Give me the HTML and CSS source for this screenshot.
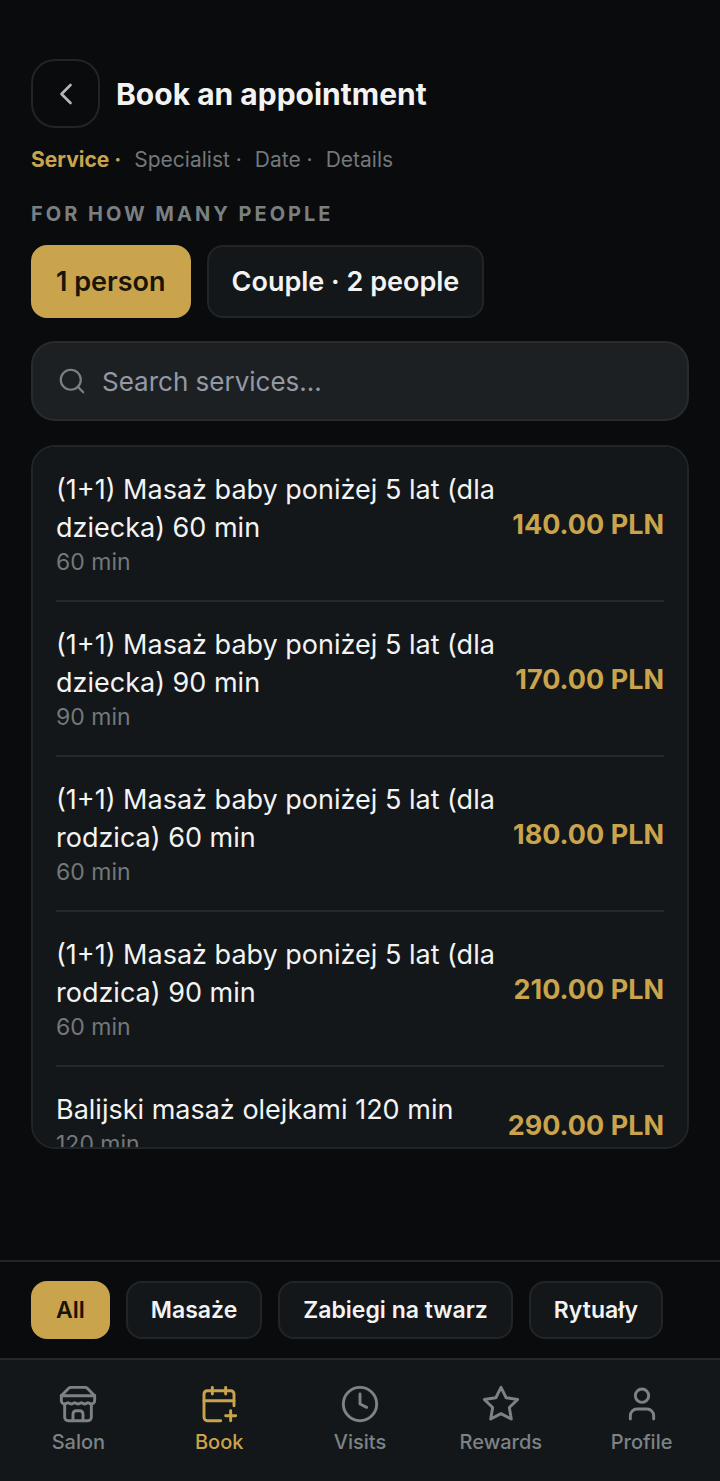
FILE: index.html
```html
<!DOCTYPE html>
<html lang="en">

<head>
    <meta charset="UTF-8" />
    <meta name="viewport" content="width=device-width, initial-scale=1.0" />
    <title>Book an appointment</title>
    <link rel="stylesheet" href="styles.css">
</head>

<body>
    <main class="booking">
        <header class="header">
            <button class="back" type="button" aria-label="Back">
                <svg class="icon" width="36" height="36" viewBox="0 0 24 24">
                    <path d="m15 18-6-6 6-6" />
                </svg>
            </button>
            <h1>Book an appointment</h1>
        </header>

        <ol class="steps">
            <li class="current">Service ·</li>
            <li>Specialist ·</li>
            <li>Date ·</li>
            <li>Details</li>
        </ol>

        <h2>For how many people</h2>
        <div class="people">
            <button class="choice active" type="button">1 person</button>
            <button class="choice" type="button">Couple · 2 people</button>
        </div>

        <label class="search">
            <svg class="icon" width="30" height="30" viewBox="0 0 24 24">
                <circle cx="11" cy="11" r="8" />
                <path d="m21 21-4.3-4.3" />
            </svg>
            <input type="text" placeholder="Search services..." aria-label="Search services">
        </label>

        <ul class="services">
            <li class="service">
                <div>
                    <p class="name">(1+1) Masaż baby poniżej 5 lat (dla dziecka) 60 min</p>
                    <p class="duration">60 min</p>
                </div>
                <span class="price">140.00 PLN</span>
            </li>
            <li class="service">
                <div>
                    <p class="name">(1+1) Masaż baby poniżej 5 lat (dla dziecka) 90 min</p>
                    <p class="duration">90 min</p>
                </div>
                <span class="price">170.00 PLN</span>
            </li>
            <li class="service">
                <div>
                    <p class="name">(1+1) Masaż baby poniżej 5 lat (dla rodzica) 60 min</p>
                    <p class="duration">60 min</p>
                </div>
                <span class="price">180.00 PLN</span>
            </li>
            <li class="service">
                <div>
                    <p class="name">(1+1) Masaż baby poniżej 5 lat (dla rodzica) 90 min</p>
                    <p class="duration">60 min</p>
                </div>
                <span class="price">210.00 PLN</span>
            </li>
            <li class="service">
                <div>
                    <p class="name">Balijski masaż olejkami 120 min</p>
                    <p class="duration">120 min</p>
                </div>
                <span class="price">290.00 PLN</span>
            </li>
        </ul>
    </main>

    <div class="categories">
        <button class="chip active" type="button">All</button>
        <button class="chip" type="button">Masaże</button>
        <button class="chip" type="button">Zabiegi na twarz</button>
        <button class="chip" type="button">Rytuały</button>
    </div>

    <nav class="tabs">
        <a class="tab" href="#salon">
            <svg class="icon" width="40" height="40" viewBox="0 0 24 24">
                <path d="m2 7 4.41-4.41A2 2 0 0 1 7.83 2h8.34a2 2 0 0 1 1.42.59L22 7" />
                <path d="M4 12v8a2 2 0 0 0 2 2h12a2 2 0 0 0 2-2v-8" />
                <path d="M15 22v-4a2 2 0 0 0-2-2h-2a2 2 0 0 0-2 2v4" />
                <path d="M2 7h20" />
                <path d="M22 7v3a2 2 0 0 1-2 2a2.7 2.7 0 0 1-1.59-.63.7.7 0 0 0-.82 0A2.7 2.7 0 0 1 16 12a2.7 2.7 0 0 1-1.59-.63.7.7 0 0 0-.82 0A2.7 2.7 0 0 1 12 12a2.7 2.7 0 0 1-1.59-.63.7.7 0 0 0-.82 0A2.7 2.7 0 0 1 8 12a2.7 2.7 0 0 1-1.59-.63.7.7 0 0 0-.82 0A2.7 2.7 0 0 1 4 12a2 2 0 0 1-2-2V7" />
            </svg>
            Salon
        </a>
        <a class="tab current" href="#book">
            <svg class="icon" width="40" height="40" viewBox="0 0 24 24">
                <path d="M21 13V6a2 2 0 0 0-2-2H5a2 2 0 0 0-2 2v14a2 2 0 0 0 2 2h8" />
                <path d="M3 10h18M16 2v4M8 2v4M16 19h6M19 16v6" />
            </svg>
            Book
        </a>
        <a class="tab" href="#visits">
            <svg class="icon" width="40" height="40" viewBox="0 0 24 24">
                <circle cx="12" cy="12" r="10" />
                <path d="M12 6v6l4 2" />
            </svg>
            Visits
        </a>
        <a class="tab" href="#rewards">
            <svg class="icon" width="40" height="40" viewBox="0 0 24 24">
                <path d="m12 2 3.09 6.26L22 9.27l-5 4.87 1.18 6.88L12 17.77l-6.18 3.25L7 14.14 2 9.27l6.91-1.01z" />
            </svg>
            Rewards
        </a>
        <a class="tab" href="#profile">
            <svg class="icon" width="40" height="40" viewBox="0 0 24 24">
                <path d="M19 21v-2a4 4 0 0 0-4-4H9a4 4 0 0 0-4 4v2" />
                <circle cx="12" cy="7" r="4" />
            </svg>
            Profile
        </a>
    </nav>
</body>

</html>
```
FILE: styles.css
```css
* {
    box-sizing: border-box;
    margin: 0;
    padding: 0;
}

body {
    display: flex;
    flex-direction: column;
    height: 100vh;
    background-color: #090b0d;
    color: #f2f3f2;
    font-family: Inter, "Liberation Sans", sans-serif;
}

button,
input {
    font: inherit;
    color: inherit;
}

ul,
ol {
    list-style: none;
}

.icon {
    flex: none;
    fill: none;
    stroke: currentColor;
    stroke-width: 1.75;
    stroke-linecap: round;
    stroke-linejoin: round;
}

.booking {
    flex: 1;
    min-height: 0;
    display: flex;
    flex-direction: column;
    padding: 59px 31px 111px;
}

.header {
    display: flex;
    align-items: center;
    gap: 16px;
}

.back {
    display: flex;
    align-items: center;
    justify-content: center;
    width: 69px;
    height: 69px;
    background: none;
    border: 2px solid #212527;
    border-radius: 24px;
    color: #b4b7b8;
}

h1 {
    font-size: 30px;
    font-weight: 700;
}

.steps {
    display: flex;
    gap: 13px;
    margin-top: 18px;
    font-size: 21px;
    line-height: 28px;
    color: #73787a;
}

.steps .current {
    color: #c9a44c;
    font-weight: 700;
}

h2 {
    margin-top: 26px;
    font-size: 20px;
    line-height: 28px;
    font-weight: 700;
    letter-spacing: 3px;
    text-transform: uppercase;
    color: #7a7f81;
}

.people {
    display: flex;
    gap: 16px;
    margin-top: 17px;
}

.choice,
.chip {
    padding: 0 23px;
    background-color: #131719;
    border: 2px solid #212527;
    border-radius: 16px;
    white-space: nowrap;
}

.choice {
    height: 73px;
    font-size: 27px;
    font-weight: 600;
}

.active {
    background-color: #c9a44c;
    border-color: #c9a44c;
    color: #1a1408;
}

.search {
    display: flex;
    align-items: center;
    gap: 15px;
    height: 80px;
    margin-top: 23px;
    padding: 0 24px;
    background-color: #1c2023;
    border: 2px solid #272b2d;
    border-radius: 24px;
    color: #7a7f81;
}

.search input {
    flex: 1;
    min-width: 0;
    background: none;
    border: none;
    outline: none;
    font-size: 26px;
    color: #f2f3f2;
}

.search input::placeholder {
    color: #9499a3;
}

.services {
    flex: 1;
    min-height: 0;
    margin-top: 24px;
    padding: 0 23px;
    overflow-y: auto;
    scrollbar-width: none;
    background-color: #131719;
    border: 2px solid #212527;
    border-radius: 24px;
}

.service {
    display: flex;
    align-items: center;
    justify-content: space-between;
    gap: 16px;
    padding: 24px 0 23px;
    border-bottom: 2px solid #25292b;
}

.service:last-child {
    border-bottom: none;
}

.name {
    font-size: 27px;
    line-height: 38px;
}

.duration {
    font-size: 23px;
    line-height: 30px;
    color: #73787a;
}

.price {
    font-size: 27px;
    font-weight: 700;
    white-space: nowrap;
    color: #c9a44c;
}

.categories {
    display: flex;
    gap: 16px;
    padding: 19px 31px;
    overflow-x: auto;
    scrollbar-width: none;
    border-top: 2px solid #212527;
}

.chip {
    flex: none;
    height: 58px;
    font-size: 23px;
    font-weight: 600;
}

.tabs {
    display: flex;
    padding: 24px 8px 27px;
    background-color: #131719;
    border-top: 2px solid #25292b;
}

.tab {
    flex: 1;
    display: flex;
    flex-direction: column;
    align-items: center;
    gap: 6px;
    font-size: 20px;
    line-height: 24px;
    font-weight: 500;
    text-decoration: none;
    color: #7d8284;
}

.tab.current {
    color: #c9a44c;
}
```
